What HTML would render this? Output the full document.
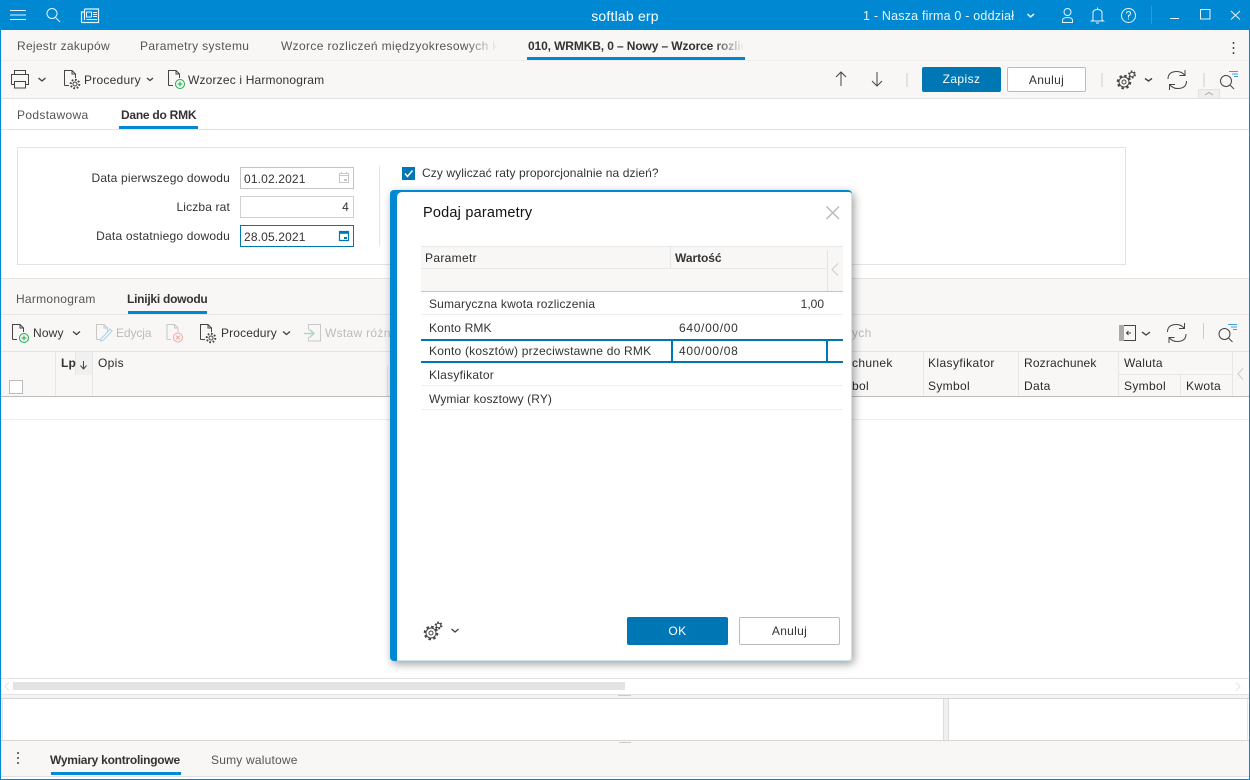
<!DOCTYPE html>
<html><head><meta charset="utf-8"><style>
html,body{margin:0;padding:0;width:1250px;height:780px;overflow:hidden;background:#fff}
body{position:relative;font-family:"Liberation Sans",sans-serif;font-size:12px;color:#333}
.a{position:absolute}
.t{position:absolute;white-space:nowrap;line-height:16px;letter-spacing:.17px}
.h{letter-spacing:.33px;color:#2a2a2a}
.b{font-weight:bold;letter-spacing:-.25px}
svg{position:absolute;overflow:visible;fill:none;stroke:#444;stroke-width:1}
.l{position:absolute;height:1px}
.v{position:absolute;width:1px}
.c{stroke-width:1.400}
</style></head><body>
<div class="a" style="left:0;top:0;width:1250px;height:780px;box-sizing:border-box;border:1px solid #0089d2;border-top:0"></div>
<div class="a" style="left:0;top:0;width:1250px;height:30px;background:#0089d2"></div>
<svg style="left:0;top:0" width="120" height="30"><g style="stroke:#e6f4fb"><path d="M10 10.500H26M10 15H26M10 19.500H26"/><circle cx="52" cy="13.500" r="5"/><path d="M55.500 17.500L60 22"/><path d="M84.500 9V20M84.500 9H98.500V22.500H82A1 1 0 0 1 81.500 21.500V12H84.500" stroke-width="1.200"/><path d="M86.500 12H91.500V17H86.500ZM93 12.500H97M93 14.500H97M93 16.500H97M86.500 19.500H97"/></g></svg>
<div class="t" style="left:560px;top:8px;width:130px;text-align:center;color:#fff;font-size:14px;letter-spacing:.2px">softlab erp</div>
<div class="t" style="left:863px;top:8px;color:#e8f5fc;font-size:12.500px;letter-spacing:.2px">1 - Nasza firma 0 - oddział</div>
<svg style="left:1020px;top:0" width="230" height="30"><g style="stroke:#e6f4fb"><path d="M7.500 14L10.500 17L14 14" stroke-width="1.500"/><circle cx="47.500" cy="12" r="3.500"/><path d="M42.500 22.500V20.500Q42.500 17.500 47.500 17.500Q52.500 17.500 52.500 20.500V22.500Z"/><path d="M73 20V13Q73 9.500 77.500 9.500Q82 9.500 82 13V20L83.500 21H71.500ZM77.500 7.500V9.500M76 23H79"/><circle cx="108.500" cy="15.500" r="7"/><path d="M106.500 13.500Q106.500 11.500 108.500 11.500Q110.500 11.500 110.500 13.500Q110.500 15 108.500 15.500V17.500M108.500 18.500V19.500"/><path d="M150 18.500H159M180.500 9.500H190V19H180.500ZM211 11L220 19.500M220 11L211 19.500"/></g><path d="M131.500 6V24" style="stroke:#2a9bd9"/></svg>

<div class="a" style="left:1px;top:30px;width:1248px;height:68px;background:#f8f7f6"></div>
<div class="l" style="left:1px;top:60px;width:1248px;background:#efedeb"></div>
<div class="l" style="left:1px;top:98px;width:1248px;background:#e2e2e2"></div>
<div class="t" style="left:17px;top:38px;color:#555;letter-spacing:.28px">Rejestr zakupów</div>
<div class="t" style="left:140px;top:38px;color:#555;letter-spacing:.35px">Parametry systemu</div>
<div class="t" style="left:281px;top:38px;color:#555;letter-spacing:.35px;width:217px;overflow:hidden;-webkit-mask-image:linear-gradient(90deg,#000 85%,transparent)">Wzorce rozliczeń międzyokresowych kosztów</div>
<div class="t b" style="left:528px;top:38px;width:216px;overflow:hidden;color:#333;letter-spacing:-.12px;-webkit-mask-image:linear-gradient(90deg,#000 85%,transparent)">010, WRMKB, 0 – Nowy – Wzorce rozliczeń</div>
<div class="a" style="left:527px;top:57px;width:218px;height:3px;background:#0089d2"></div>
<svg style="left:1230px;top:42px" width="6" height="14"><path d="M3.500 0V2M3.500 5V7M3.500 10V12" stroke-width="1.500"/></svg>

<svg style="left:0;top:60px" width="340" height="38">
<path d="M14.500 14.500V10.500H25.500V14.500M11.500 24.500V14.500H28.500V24.500H25M15 24.500H11.500M14.500 21.500H25.500V28H14.500Z"/><path class="c" d="M38.500 18L42 21L45.500 18"/>
<path d="M64.500 25.500V10.500H72L75.500 14V18M72 10.500V14H75.500M64.500 25.500H69"/><circle cx="75" cy="24" r="2"/><circle cx="75" cy="24" r="4.300" stroke-dasharray="1.700 1.650" stroke-width="2"/><path class="c" d="M147 18L150 20.500L153 18"/>
<path d="M168.500 25.500V10.500H176L179.500 14V18M176 10.500V14H179.500M168.500 25.500H173"/><circle cx="180" cy="24" r="4.500" style="stroke:#1fa84f"/><path d="M180 21.500V26.500M177.500 24H182.500" style="stroke:#1fa84f"/>
</svg>
<div class="t" style="left:84px;top:72px;letter-spacing:.24px">Procedury</div>
<div class="t" style="left:188px;top:72px">Wzorzec i Harmonogram</div>
<svg style="left:830px;top:60px" width="420" height="38">
<path d="M11 26V12M6 17L11 12L16 17M47 12V26M42 21L47 26L52 21"/><path d="M77 13V27" style="stroke:#ccc"/><path d="M272 13V27M374 13V27" style="stroke:#ccc"/>
<circle cx="294" cy="22" r="2"/><circle cx="294" cy="22" r="5"/><circle cx="294" cy="22" r="6.300" stroke-dasharray="2.500 2.450" stroke-width="2"/><circle cx="302" cy="14.500" r="2.300"/><circle cx="302" cy="14.500" r="3.200" stroke-dasharray="1.700 1.650" stroke-width="1.500"/>
<path class="c" d="M315 18.500L318.500 21L322 18.500"/>
<path d="M338 19Q338 11.500 347 11.500Q351.500 11.500 354.500 15M356.500 21Q356.500 28.500 347.500 28.500Q343 28.500 340 25M355 10V15.500H349.500M339.500 30V24.500H345"/>
<circle cx="396" cy="21" r="5.500"/><path d="M400 25L404 29"/><path d="M399 11.500H408M402 14H408M404 16.500H408" style="stroke:#3aa3dd"/>
</svg>
<div class="a" style="left:922px;top:67px;width:79px;height:25px;background:#0077b5;border-radius:2px;color:#fff;text-align:center;line-height:25px;letter-spacing:.4px">Zapisz</div>
<div class="a" style="left:1007px;top:67px;width:77px;height:23px;border:1px solid #bbb;border-radius:2px;background:#fff;color:#333;text-align:center;line-height:24px;letter-spacing:.3px">Anuluj</div>
<div class="a" style="left:1198px;top:89px;width:22px;height:9px;background:#f0efee;border:1px solid #e2e2e2;border-bottom:0;box-sizing:border-box"></div>
<svg style="left:1198px;top:90px" width="22" height="8"><path d="M7 5L11 2.500L15 5" style="stroke:#aaa"/></svg>

<div class="l" style="left:1px;top:129px;width:1248px;background:#e3e3e3"></div>
<div class="t" style="left:17px;top:107px;color:#555;letter-spacing:.35px">Podstawowa</div>
<div class="t b" style="left:121px;top:107px;color:#333">Dane do RMK</div>
<div class="a" style="left:119px;top:126px;width:79px;height:3px;background:#0089d2"></div>

<div class="a" style="left:17px;top:147px;width:1107px;height:116px;border:1px solid #e3e3e3"></div>
<div class="t" style="left:30px;top:170px;width:200px;text-align:right">Data pierwszego dowodu</div>
<div class="t" style="left:30px;top:199px;width:200px;text-align:right;letter-spacing:.15px">Liczba rat</div>
<div class="t" style="left:30px;top:228px;width:200px;text-align:right;letter-spacing:.2px">Data ostatniego dowodu</div>
<div class="a" style="left:240px;top:167px;width:112px;height:20px;border:1px solid #c4c4c4"></div>
<div class="a" style="left:240px;top:196px;width:112px;height:20px;border:1px solid #d0d0d0"></div>
<div class="a" style="left:240px;top:225px;width:112px;height:20px;border:1px solid #0077b5"></div>
<div class="t" style="left:244px;top:171px;letter-spacing:.15px">01.02.2021</div>
<div class="t" style="left:240px;top:199px;width:109px;text-align:right">4</div>
<div class="t" style="left:244px;top:229px;letter-spacing:.15px">28.05.2021</div>
<svg style="left:339px;top:172px" width="10" height="12"><path d="M0.500 1.500H9.500V10.500H0.500ZM0.500 3.500H9.500" style="stroke:#c8c8c8"/><path d="M5.500 7.500H7.500V8.500H5.500Z" style="stroke:#c8c8c8"/><path d="M2.500 0V2M7.500 0V2" style="stroke:#c8c8c8"/></svg>
<svg style="left:339px;top:230px" width="10" height="12"><path d="M0.500 1.500H9.500V10.500H0.500Z" style="stroke:#0077b5;stroke-width:1.200"/><path d="M0.500 2.800H9.500" style="stroke:#0077b5;stroke-width:2"/><path d="M5.500 7.500H7.500V8.500H5.500Z" style="stroke:#0077b5"/></svg>
<div class="v" style="left:379px;top:166px;height:80px;background:#e3e3e3"></div>
<div class="a" style="left:402px;top:167px;width:13px;height:13px;background:#0077b5"></div>
<svg style="left:402px;top:167px" width="13" height="13"><path d="M3 6.500L5.500 9.500L10.500 3.500" style="stroke:#fff;stroke-width:1.500"/></svg>
<div class="t" style="left:422px;top:165px;letter-spacing:.09px">Czy wyliczać raty proporcjonalnie na dzień?</div>

<div class="l" style="left:1px;top:278px;width:1248px;background:#e3e3e3"></div>
<div class="a" style="left:1px;top:279px;width:1248px;height:117px;background:#f8f7f6"></div>
<div class="t" style="left:16px;top:291px;color:#555;letter-spacing:.27px">Harmonogram</div>
<div class="t b" style="left:127px;top:291px;color:#333">Linijki dowodu</div>
<div class="a" style="left:128px;top:311px;width:79px;height:3px;background:#0089d2"></div>
<div class="l" style="left:1px;top:314px;width:1248px;background:#e6e6e6"></div>
<div class="l" style="left:1px;top:351px;width:1248px;background:#e3e3e3"></div>
<svg style="left:0;top:314px" width="420" height="38">
<path d="M12.500 25.500V10.500H20L23.500 14V18M20 10.500V14H23.500M12.500 25.500H17"/><circle cx="24" cy="24" r="4.500" style="stroke:#1fa84f"/><path d="M24 21.500V26.500M21.500 24H26.500" style="stroke:#1fa84f"/><path class="c" d="M73 17.500L76.500 20.500L80 17.500"/>
<g style="stroke:#c8c8c8"><path d="M96.500 25.500V10.500H104L107.500 14V18M104 10.500V14H107.500M96.500 25.500H101"/><path d="M167 25.500V10.500H174.500L178 14V18M174.500 10.500V14H178M167 25.500H171"/></g><path d="M101 25L110 15L112 17L103 26.500L100.500 27Z" style="stroke:#a9d3ec"/>
<circle cx="178" cy="23.500" r="4.500" style="stroke:#f0a9a0"/><path d="M176 21.500L180 25.500M180 21.500L176 25.500" style="stroke:#f0a9a0"/>
<path d="M200.500 25.500V10.500H208L211.500 14V18M208 10.500V14H211.500M200.500 25.500H205"/><circle cx="211" cy="24" r="2"/><circle cx="211" cy="24" r="4.300" stroke-dasharray="1.700 1.650" stroke-width="2"/><path class="c" d="M283 17.500L286.500 20.500L290 17.500"/>
<path d="M308.500 16V10.500H320.500V27H308.500V23" style="stroke:#c8c8c8"/><path d="M304 19.500H313M309.500 15.500L314 19.500L309.500 23.500" style="stroke:#a9dcbc;stroke-width:1.500"/>
</svg>
<div class="t" style="left:33px;top:325px">Nowy</div>
<div class="t" style="left:116px;top:325px;color:#bbb;letter-spacing:-.1px">Edycja</div>
<div class="t" style="left:221px;top:325px;letter-spacing:.13px">Procedury</div>
<div class="t" style="left:325px;top:325px;color:#bbb;letter-spacing:.3px">Wstaw różnice kursowych</div>
<div class="t" style="left:852px;top:325px;color:#bbb;letter-spacing:.3px">ych</div>
<svg style="left:1110px;top:314px" width="140" height="38">
<path d="M9.500 11.500H25.500V26.500H9.500Z"/><rect x="9" y="11" width="5" height="16" fill="#aaa" style="stroke:none"/><path d="M21 19H17M18.500 17L16.500 19L18.500 21"/><path class="c" d="M32 18L36 21L40 18"/>
<path d="M57.500 18Q57.500 10.500 66.500 10.500Q71 10.500 74 14M76 20Q76 27.500 67 27.500Q62.500 27.500 59.500 24M74.500 9V14.500H69M59 29V23.500H64.500"/><path d="M93.500 9V25" style="stroke:#ccc"/>
<circle cx="114.500" cy="20" r="5.500"/><path d="M118.500 24L122.500 28"/><path d="M118 10.500H127M121 13H127M123 15.500H127" style="stroke:#3aa3dd"/>
</svg>
<div class="v" style="left:55px;top:352px;height:44px;background:#e6e6e6"></div>
<div class="a" style="left:75px;top:352px;width:17px;height:23px;background:#f0f0f0;border-left:1px solid #e6e6e6;box-sizing:border-box"></div>
<div class="v" style="left:92px;top:352px;height:44px;background:#e6e6e6"></div>
<div class="v" style="left:387px;top:365px;height:31px;background:#e3e3e3"></div>
<div class="a" style="left:9px;top:380px;width:12px;height:12px;border:1px solid #bbb;background:#fff"></div>
<div class="t b" style="left:61px;top:355px;letter-spacing:.2px">Lp</div>
<svg style="left:80px;top:361px" width="8" height="9"><path d="M3.500 0V8M0.500 4.500L3.500 8L6.500 4.500"/></svg>
<div class="t h" style="left:98px;top:355px">Opis</div>
<div class="t h" style="left:852px;top:355px">chunek</div>
<div class="t h" style="left:852px;top:378px">bol</div>
<div class="t h" style="left:928px;top:355px;letter-spacing:.4px">Klasyfikator</div>
<div class="t h" style="left:928px;top:378px">Symbol</div>
<div class="t h" style="left:1024px;top:355px;letter-spacing:.17px">Rozrachunek</div>
<div class="t h" style="left:1024px;top:378px">Data</div>
<div class="t h" style="left:1124px;top:355px">Waluta</div>
<div class="t h" style="left:1124px;top:378px">Symbol</div>
<div class="t h" style="left:1186px;top:378px">Kwota</div>
<div class="v" style="left:923px;top:352px;height:44px;background:#e6e6e6"></div>
<div class="v" style="left:1018px;top:352px;height:44px;background:#e6e6e6"></div>
<div class="v" style="left:1118px;top:352px;height:44px;background:#e6e6e6"></div>
<div class="v" style="left:1180px;top:375px;height:21px;background:#e6e6e6"></div>
<div class="l" style="left:1118px;top:374px;width:114px;background:#e6e6e6"></div>
<div class="v" style="left:1232px;top:352px;height:44px;background:#e6e6e6"></div>
<svg style="left:1237px;top:368px" width="8" height="12"><path d="M6 0.500L1 6L6 11.500" style="stroke:#ccc"/></svg>
<div class="l" style="left:1px;top:396px;width:1248px;background:#bdbdbd"></div>
<div class="l" style="left:1px;top:419px;width:1248px;background:#eee"></div>

<div class="l" style="left:1px;top:678px;width:1248px;background:#e3e3e3"></div>
<div class="l" style="left:1px;top:694px;width:1248px;background:#e3e3e3"></div>
<div class="a" style="left:13px;top:682px;width:612px;height:8px;background:#e3e3e3"></div>
<svg style="left:3px;top:682px" width="1244" height="9"><path d="M6 0.500L2 4.500L6 8.500M1233 0.500L1237 4.500L1233 8.500" style="stroke:#e3e3e3"/></svg>
<div class="a" style="left:1px;top:695px;width:1248px;height:4px;background:#f4f4f4"></div>
<div class="l" style="left:1px;top:698px;width:1248px;background:#d6d6d6"></div>
<div class="l" style="left:1px;top:740px;width:1248px;background:#d6d6d6"></div>
<div class="v" style="left:2px;top:699px;height:41px;background:#e6e6e6"></div>
<div class="v" style="left:1247px;top:699px;height:41px;background:#e6e6e6"></div>
<div class="l" style="left:618px;top:695px;width:13px;background:#ccc"></div>
<div class="a" style="left:943px;top:699px;width:6px;height:41px;background:#f0f0f0;border-left:1px solid #ddd;border-right:1px solid #ddd;box-sizing:border-box"></div>
<div class="a" style="left:1px;top:741px;width:1248px;height:35px;background:#f8f7f6"></div>
<div class="l" style="left:1px;top:776px;width:1248px;background:#e0e0e0"></div>
<div class="l" style="left:619px;top:742px;width:12px;background:#ccc"></div>
<svg style="left:15px;top:752px" width="6" height="14"><path d="M3 0V2M3 5V7M3 10V12" stroke-width="1.500"/></svg>
<div class="t b" style="left:50px;top:752px;color:#333">Wymiary kontrolingowe</div>
<div class="t" style="left:211px;top:752px;color:#555;letter-spacing:.2px">Sumy walutowe</div>
<div class="a" style="left:51px;top:772px;width:130px;height:3px;background:#0089d2"></div>

<div class="a" style="left:390px;top:190px;width:462px;height:471px;background:#0089d2;border-radius:4px;box-shadow:2px 3px 9px rgba(0,0,0,.38)"></div>
<div class="a" style="left:397px;top:192px;width:455px;height:469px;background:#fff;border-radius:5px 3px 3px 0;box-shadow:inset -1px -1px 0 #cfe4f2"></div>
<div class="t" style="left:423px;top:205px;font-size:14.500px;color:#111;letter-spacing:.2px">Podaj parametry</div>
<svg style="left:826px;top:206px" width="14" height="14"><path d="M0.500 0.500L13 13M13 0.500L0.500 13" style="stroke:#bbb;stroke-width:1.500"/></svg>

<div class="a" style="left:421px;top:246px;width:422px;height:45px;background:#f8f7f6"></div>
<div class="l" style="left:421px;top:246px;width:422px;background:#e8e8e8"></div>
<div class="l" style="left:421px;top:268px;width:406px;background:#e8e8e8"></div>
<div class="l" style="left:421px;top:291px;width:422px;background:#c4c4c4"></div>
<div class="v" style="left:670px;top:247px;height:21px;background:#e6e6e6"></div>
<div class="v" style="left:827px;top:250px;height:41px;background:#e3e3e3"></div>
<div class="t h" style="left:425px;top:250px">Parametr</div>
<div class="t b" style="left:675px;top:250px;color:#333;letter-spacing:-.05px">Wartość</div>
<svg style="left:831px;top:263px" width="8" height="13"><path d="M7 0.500L1 6.500L7 12.500" style="stroke:#ccc"/></svg>
<div class="t" style="left:429px;top:296px">Sumaryczna kwota rozliczenia</div>
<div class="t" style="left:700px;top:296px;width:124px;text-align:right;letter-spacing:0">1,00</div>
<div class="l" style="left:421px;top:314px;width:422px;background:#eee"></div>
<div class="t" style="left:429px;top:320px;letter-spacing:.15px">Konto RMK</div>
<div class="t" style="left:679px;top:320px;letter-spacing:.68px">640/00/00</div>
<div class="a" style="left:421px;top:339px;width:422px;height:2px;background:#0077b5"></div>
<div class="a" style="left:421px;top:361px;width:422px;height:2px;background:#0077b5"></div>
<div class="a" style="left:671px;top:341px;width:2px;height:20px;background:#0077b5"></div>
<div class="a" style="left:826px;top:341px;width:2px;height:20px;background:#0077b5"></div>
<div class="t" style="left:429px;top:343px;letter-spacing:.21px">Konto (kosztów) przeciwstawne do RMK</div>
<div class="t" style="left:679px;top:343px;letter-spacing:.68px">400/00/08</div>
<div class="t" style="left:429px;top:367px;letter-spacing:.25px">Klasyfikator</div>
<div class="l" style="left:421px;top:385px;width:422px;background:#eee"></div>
<div class="t" style="left:429px;top:391px;letter-spacing:.1px">Wymiar kosztowy (RY)</div>
<div class="l" style="left:421px;top:409px;width:422px;background:#eee"></div>

<svg style="left:420px;top:618px" width="45" height="26">
<circle cx="11" cy="15" r="2"/><circle cx="11" cy="15" r="5"/><circle cx="11" cy="15" r="6.300" stroke-dasharray="2.500 2.450" stroke-width="2"/><circle cx="18.500" cy="7.500" r="2.300"/><circle cx="18.500" cy="7.500" r="3.200" stroke-dasharray="1.700 1.650" stroke-width="1.500"/><path class="c" d="M31.500 11L35 14L38.500 11"/>
</svg>
<div class="a" style="left:627px;top:617px;width:101px;height:28px;background:#0077b5;border-radius:2px;color:#fff;text-align:center;line-height:28px;letter-spacing:.4px">OK</div>
<div class="a" style="left:739px;top:617px;width:99px;height:26px;border:1px solid #bbb;border-radius:2px;background:#fff;color:#333;text-align:center;line-height:27px;letter-spacing:.3px">Anuluj</div>
</body></html>
